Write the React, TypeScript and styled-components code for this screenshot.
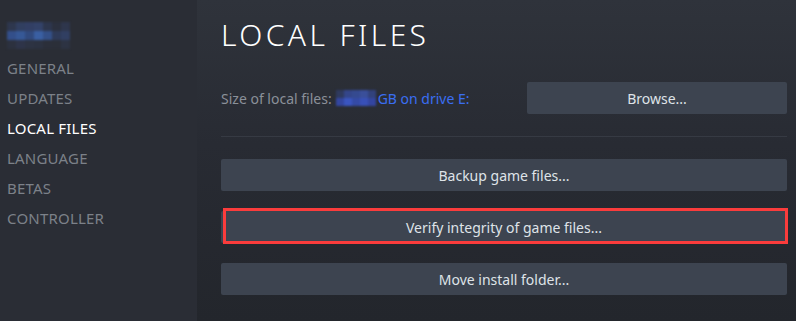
import React from 'react';
import styled, { createGlobalStyle } from 'styled-components';

const GlobalStyle = createGlobalStyle`
  html, body {
    margin: 0;
    padding: 0;
    background: #24272e;
  }
  * {
    box-sizing: border-box;
  }
`;

const navItems = ['GENERAL', 'UPDATES', 'LOCAL FILES', 'LANGUAGE', 'BETAS', 'CONTROLLER'];

const Blur: React.FC<{ cells: string[][]; size: number }> = ({ cells, size }) => (
  <svg
    width={cells[0].length * size}
    height={cells.length * size}
    style={{ display: 'block', filter: 'blur(1px)' }}
  >
    {cells.map((row, y) =>
      row.map((c, x) => (
        <rect key={`${x}-${y}`} x={x * size} y={y * size} width={size} height={size} fill={c} />
      ))
    )}
  </svg>
);

const nameCells = [
  ['#2e374e', '#313f60', '#323f64', '#334268', '#2d364d', '#2b303e', '#2e364c'],
  ['#334f8a', '#365896', '#314a7e', '#3a5fa2', '#345088', '#2e3a58', '#313f62'],
  ['#2c313f', '#2e3449', '#2d3343', '#2c3241', '#2b2f3a', '#2b2f39', '#2d3343'],
];

const sizeCells = [
  ['#2f3a5e', '#34468a', '#354a90', '#3a4f9a', '#32427c'],
  ['#3346a0', '#3a55c0', '#344aa6', '#3850b8', '#3345a0'],
];

const App: React.FC = () => {
  return (
    <>
      <GlobalStyle />
      <Page>
        <Sidebar>
          <GameName>
            <Blur cells={nameCells} size={9} />
          </GameName>
          <Nav>
            {navItems.map((item) => (
              <NavItem key={item} $active={item === 'LOCAL FILES'}>
                {item}
              </NavItem>
            ))}
          </Nav>
        </Sidebar>
        <Main>
          <Title>LOCAL FILES</Title>
          <SizeRow>
            <SizeLabel>
              Size of local files:
              <BlurSlot>
                <Blur cells={sizeCells} size={8} />
              </BlurSlot>
              <DriveLink>GB on drive E:</DriveLink>
            </SizeLabel>
            <BrowseButton>Browse...</BrowseButton>
          </SizeRow>
          <Divider />
          <Actions>
            <ActionButton>Backup game files...</ActionButton>
            <ActionButton>
              Verify integrity of game files...
              <Highlight />
            </ActionButton>
            <ActionButton>Move install folder...</ActionButton>
          </Actions>
        </Main>
      </Page>
    </>
  );
};

export default App;

const Page = styled.div`
  display: flex;
  width: 796px;
  height: 321px;
  overflow: hidden;
  font-family: 'Noto Sans', 'Open Sans', sans-serif;
`;

const Sidebar = styled.aside`
  width: 197px;
  flex-shrink: 0;
  background: #2a2d35;
  padding: 22px 0 0 7px;
`;

const GameName = styled.div`
  height: 31px;
`;

const Nav = styled.nav`
  display: flex;
  flex-direction: column;
`;

const NavItem = styled.div<{ $active?: boolean }>`
  height: 30px;
  line-height: 30px;
  font-size: 15px;
  letter-spacing: 0.2px;
  color: ${(p) => (p.$active ? '#ffffff' : '#7c8189')};
`;

const Main = styled.main`
  flex: 1;
  display: flex;
  flex-direction: column;
  padding: 20px 9px 0 24px;
  background: linear-gradient(180deg, #2f333b 0%, #282b33 45%, #23262c 100%);
`;

const Title = styled.h1`
  margin: 0;
  font-size: 30px;
  line-height: 30px;
  font-weight: 300;
  letter-spacing: 3.4px;
  color: #ffffff;
`;

const SizeRow = styled.div`
  display: flex;
  align-items: center;
  margin-top: 32px;
`;

const SizeLabel = styled.div`
  flex: 1;
  display: flex;
  align-items: center;
  font-size: 14px;
  color: #8a9099;
`;

const BlurSlot = styled.span`
  margin: 0 2px 0 4px;
`;

const DriveLink = styled.span`
  color: #3a6ef2;
`;

const ButtonBase = styled.button`
  position: relative;
  height: 32px;
  border: none;
  border-radius: 2px;
  background: #3d4450;
  color: #dfe3e8;
  font-family: 'Noto Sans', 'Open Sans', sans-serif;
  font-size: 14px;
  padding: 0;
  cursor: pointer;
`;

const BrowseButton = styled(ButtonBase)`
  width: 260px;
`;

const Divider = styled.div`
  height: 1px;
  margin: 22px 0;
  background: #363a43;
`;

const Actions = styled.div`
  display: flex;
  flex-direction: column;
  gap: 20px;
`;

const ActionButton = styled(ButtonBase)`
  width: 100%;
`;

const Highlight = styled.span`
  position: absolute;
  top: -3px;
  bottom: -1px;
  left: 2px;
  right: -1px;
  border: 3px solid #fb3c3c;
  pointer-events: none;
`;
